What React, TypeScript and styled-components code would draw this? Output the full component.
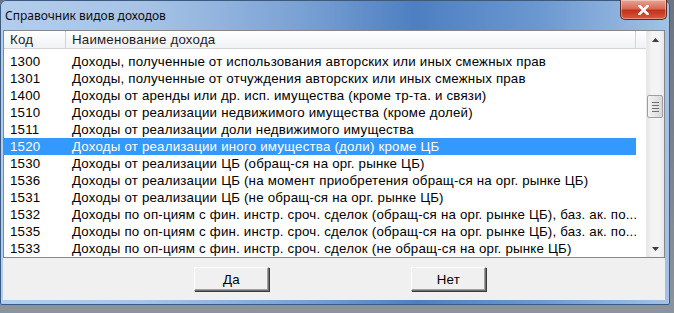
import { createGlobalStyle, styled } from 'styled-components';

const GlobalStyle = createGlobalStyle`
  html, body {
    margin: 0;
    padding: 0;
    background: #6b7480;
  }
`;

const Desktop = styled.div`
  width: 674px;
  height: 313px;
  overflow: hidden;
  background: linear-gradient(180deg, #6b7480 0%, #8b939c 100%);
`;

const Window = styled.div`
  display: flex;
  flex-direction: column;
  width: 670px;
  height: 305px;
  box-sizing: border-box;
  padding: 0 5px 5px 3px;
  border-radius: 6px 6px 2px 2px;
  background: linear-gradient(
    90deg,
    #b3cdec 0%,
    #a6c3e6 22%,
    #7aa1d4 45%,
    #4d7fc1 62%,
    #6a97d0 80%,
    #a3c2e5 100%
  );
  box-shadow: inset 0 0 0 1px #3c5a80;
`;

const TitleBar = styled.div`
  display: flex;
  align-items: flex-start;
  justify-content: space-between;
  height: 30px;
  padding-left: 2px;
`;

const Title = styled.span`
  margin-top: 7px;
  font-family: 'Noto Sans', 'Liberation Sans', sans-serif;
  font-size: 12px;
  color: #0c0c0c;
`;

const CloseButton = styled.div`
  display: flex;
  align-items: center;
  justify-content: center;
  width: 47px;
  height: 20px;
  margin-right: -2px;
  border: 1px solid #5a2b25;
  border-top: none;
  border-radius: 0 0 5px 5px;
  box-sizing: border-box;
  background: linear-gradient(180deg, #eaa597 0%, #d86a55 45%, #c2321a 55%, #d85a3e 100%);
  box-shadow: inset 0 0 0 1px rgba(255, 255, 255, 0.35);
`;

const Client = styled.div`
  display: flex;
  flex-direction: column;
  flex: 1;
  background: #f0f0f0;
`;

const ListBox = styled.div`
  display: flex;
  height: 228px;
  box-sizing: border-box;
  border: 1px solid #828790;
  background: #ffffff;
  font-family: 'Liberation Sans', Arial, sans-serif;
  font-size: 13.3px;
  letter-spacing: 0.2px;
`;

const ListMain = styled.div`
  display: flex;
  flex-direction: column;
  flex: 1;
  overflow: hidden;
`;

const HeaderRow = styled.div`
  display: flex;
  height: 19px;
  box-sizing: border-box;
  border-bottom: 1px solid #d5d5d5;
  background: linear-gradient(180deg, #ffffff 0%, #f7f8fa 50%, #f1f2f4 100%);
  color: #1e1e1e;
`;

const HeaderCell = styled.div<{ $width: number }>`
  display: flex;
  align-items: center;
  width: ${(p) => p.$width}px;
  box-sizing: border-box;
  padding-left: 6px;
  border-right: 1px solid #d5d5d5;
`;

const HeaderFiller = styled.div`
  flex: 1;
`;

const Rows = styled.div`
  display: flex;
  flex-direction: column;
  padding-top: 4px;
`;

const Row = styled.div<{ $selected?: boolean }>`
  display: flex;
  width: 632px;
  height: 17px;
  align-items: center;
  flex-shrink: 0;
  white-space: nowrap;
  background: ${(p) => (p.$selected ? '#3399ff' : 'transparent')};
  color: ${(p) => (p.$selected ? '#ffffff' : '#000000')};
`;

const Cell = styled.div<{ $width: number }>`
  width: ${(p) => p.$width}px;
  box-sizing: border-box;
  padding-left: 6px;
  overflow: hidden;
`;

const ScrollBar = styled.div`
  display: flex;
  flex-direction: column;
  width: 17px;
  background: linear-gradient(90deg, #e6e6e6 0%, #f4f4f4 30%, #f4f4f4 70%, #e9e9e9 100%);
  border-left: 1px solid #ececec;
`;

const ArrowBox = styled.div`
  display: flex;
  align-items: center;
  justify-content: center;
  height: 17px;
`;

const Track = styled.div`
  flex: 1;
  display: flex;
  flex-direction: column;
`;

const Thumb = styled.div`
  display: flex;
  flex-direction: column;
  align-items: center;
  justify-content: center;
  gap: 2px;
  height: 21px;
  margin: 47px 1px 0 0;
  border: 1px solid #9a9ea6;
  border-radius: 2px;
  background: linear-gradient(90deg, #f3f3f3 0%, #e6e6e6 50%, #d9d9d9 100%);
`;

const Grip = styled.span`
  width: 7px;
  height: 1px;
  background: #6c6f74;
`;

const ButtonBar = styled.div`
  display: flex;
  align-items: center;
  gap: 142px;
  flex: 1;
  padding-left: 191px;
`;

const DialogButton = styled.button`
  width: 75px;
  height: 24px;
  padding: 0;
  border: 1px solid;
  border-color: #ffffff #6f6f6f #6f6f6f #ffffff;
  box-shadow: 1px 1px 0 #3a3a3a, inset -1px -1px 0 #a0a0a0;
  background: #f0f0f0;
  font-family: 'Liberation Sans', Arial, sans-serif;
  font-size: 13.3px;
  letter-spacing: 0.3px;
  color: #000000;
`;

const incomes: { code: string; name: string }[] = [
  { code: '1300', name: 'Доходы, полученные от использования авторских или иных смежных прав' },
  { code: '1301', name: 'Доходы, полученные от отчуждения авторских или иных смежных прав' },
  { code: '1400', name: 'Доходы от аренды или др. исп. имущества (кроме тр-та. и связи)' },
  { code: '1510', name: 'Доходы от реализации недвижимого имущества (кроме долей)' },
  { code: '1511', name: 'Доходы от реализации доли недвижимого имущества' },
  { code: '1520', name: 'Доходы от реализации иного имущества (доли) кроме ЦБ' },
  { code: '1530', name: 'Доходы от реализации ЦБ (обращ-ся на орг. рынке ЦБ)' },
  { code: '1536', name: 'Доходы от реализации ЦБ (на момент приобретения обращ-ся на орг. рынке ЦБ)' },
  { code: '1531', name: 'Доходы от реализации ЦБ (не обращ-ся на орг. рынке ЦБ)' },
  {
    code: '1532',
    name: 'Доходы по оп-циям с фин. инстр. сроч. сделок (обращ-ся на орг. рынке ЦБ), баз. ак. по...',
  },
  {
    code: '1535',
    name: 'Доходы по оп-циям с фин. инстр. сроч. сделок (обращ-ся на орг. рынке ЦБ), баз. ак. по...',
  },
  { code: '1533', name: 'Доходы по оп-циям с фин. инстр. сроч. сделок (не обращ-ся на орг. рынке ЦБ)' },
];

const SELECTED = '1520';

const App = () => {
  return (
    <>
      <GlobalStyle />
      <Desktop>
        <Window>
          <TitleBar>
            <Title>Справочник видов доходов</Title>
            <CloseButton>
              <svg width="11" height="10" viewBox="0 0 11 10">
                <path
                  d="M1.5 1 L9.5 9 M9.5 1 L1.5 9"
                  stroke="#ffffff"
                  strokeWidth="2.6"
                  strokeLinecap="square"
                />
              </svg>
            </CloseButton>
          </TitleBar>

          <Client>
            <ListBox>
              <ListMain>
                <HeaderRow>
                  <HeaderCell $width={62}>Код</HeaderCell>
                  <HeaderCell $width={570}>Наименование дохода</HeaderCell>
                  <HeaderFiller />
                </HeaderRow>
                <Rows>
                  {incomes.map((item) => (
                    <Row key={item.code} $selected={item.code === SELECTED}>
                      <Cell $width={62}>{item.code}</Cell>
                      <Cell $width={570}>{item.name}</Cell>
                    </Row>
                  ))}
                </Rows>
              </ListMain>

              <ScrollBar>
                <ArrowBox>
                  <svg width="7" height="4" viewBox="0 0 7 4">
                    <path d="M0 4 L3.5 0 L7 4 Z" fill="#3c3c3c" />
                  </svg>
                </ArrowBox>
                <Track>
                  <Thumb>
                    <Grip />
                    <Grip />
                    <Grip />
                    <Grip />
                  </Thumb>
                </Track>
                <ArrowBox>
                  <svg width="7" height="4" viewBox="0 0 7 4">
                    <path d="M0 0 L7 0 L3.5 4 Z" fill="#3c3c3c" />
                  </svg>
                </ArrowBox>
              </ScrollBar>
            </ListBox>

            <ButtonBar>
              <DialogButton>Да</DialogButton>
              <DialogButton>Нет</DialogButton>
            </ButtonBar>
          </Client>
        </Window>
      </Desktop>
    </>
  );
};

export default App;
